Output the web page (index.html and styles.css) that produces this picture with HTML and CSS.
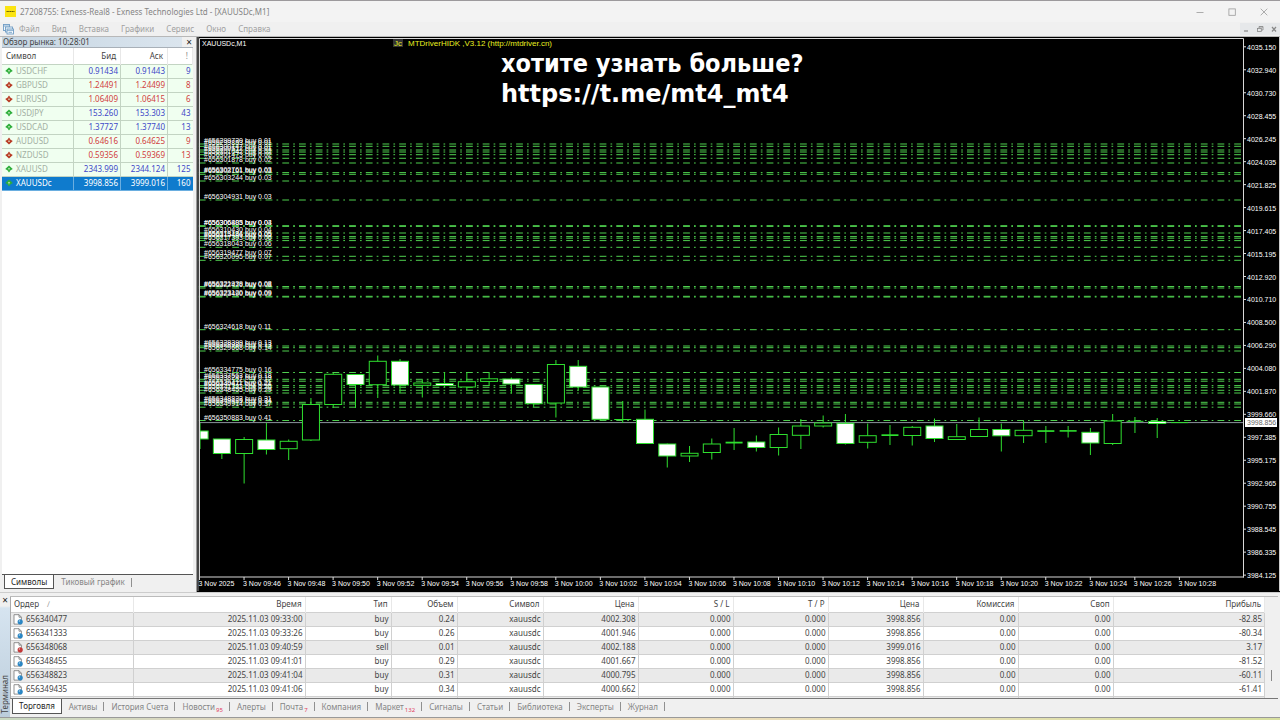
FILE: index.html
```html
<!DOCTYPE html>
<html lang="ru">
<head>
<meta charset="utf-8">
<title>27208755: Exness-Real8</title>
<link rel="stylesheet" href="styles.css">
</head>
<body>
<header class="titlebar">
  <svg class="logo" viewBox="0 0 11 11"><rect width="11" height="11" fill="#fbe412"/><path d="M1.5 5.5h8" stroke="#6b6100" stroke-dasharray="1.4 .3"/></svg>
  <h1 class="title">27208755: Exness-Real8 - Exness Technologies Ltd - [XAUUSDc,M1]</h1>
  <div class="winbtns">
    <button aria-label="Свернуть"><svg viewBox="0 0 8 8"><path d="M.5 4.5h7"/></svg></button>
    <button aria-label="Развернуть"><svg viewBox="0 0 8 8"><rect x=".9" y=".9" width="6.4" height="6.4"/></svg></button>
    <button aria-label="Закрыть"><svg viewBox="0 0 8 8"><path d="M.7.7l6.6 6.6M7.3.7L.7 7.3"/></svg></button>
  </div>
</header>
<nav class="menubar">
  <svg class="appicon" viewBox="0 0 11 11"><g fill="#f4f9fd" stroke="#6f9cc4" stroke-width=".9"><rect x=".5" y=".5" width="6" height="6"/><path d="M.5 2h6"/><rect x="2.5" y="3" width="7" height="5"/><rect x="4" y="5" width="6.5" height="5"/><path d="M4 6.3h6.5M5.5 8.3h3.5"/></g></svg>
  <button>Файл</button><button>Вид</button><button>Вставка</button><button>Графики</button><button>Сервис</button><button>Окно</button><button>Справка</button>
  <div class="mdibtns">
    <button aria-label="Свернуть окно"><svg viewBox="0 0 8 8"><path d="M2 6h4" stroke-width="1.2"/></svg></button>
    <button aria-label="Восстановить окно"><svg viewBox="0 0 8 8"><path d="M3 3V1.5h4V5H5.5M3 2h4"/><rect x="1.5" y="3.5" width="3.8" height="3"/></svg></button>
    <button aria-label="Закрыть окно"><svg viewBox="0 0 8 8"><path d="M2 2l4 4.5M6 2L2 6.5" stroke-width="1.2"/></svg></button>
  </div>
</nav>
<main class="workspace">
  <section class="watch">
    <div class="watch-head"><h2>Обзор рынка: 10:28:01</h2><button aria-label="Закрыть">×</button></div>
    <div class="watch-body">
      <table class="quotes">
        <colgroup><col><col class="q-price"><col class="q-price"><col class="q-spread"></colgroup>
        <thead><tr><th>Символ</th><th>Бид</th><th>Аск</th><th>!</th></tr></thead>
        <tbody id="quotes"></tbody>
      </table>
    </div>
    <div class="tabs watch-tabs"><button class="active">Символы</button><button>Тиковый график</button></div>
  </section>
  <section class="chart">
    <svg id="chart" viewBox="197 37 1083 554" role="img" aria-label="XAUUSDc M1"></svg>
  </section>
</main>
<section class="terminal">
  <div class="side"><button aria-label="Закрыть">×</button><span>Терминал</span></div>
  <div class="terminal-main">
    <div class="orders-wrap">
      <table class="orders">
        <colgroup><col class="c-order"><col class="c-time"><col class="c-type"><col class="c-vol"><col class="c-type"><col class="c-num"><col class="c-num"><col class="c-num"><col class="c-num"><col class="c-num"><col class="c-num"><col></colgroup>
        <thead><tr><th>Ордер <span class="sort">∕</span></th><th>Время</th><th>Тип</th><th>Объем</th><th>Символ</th><th>Цена</th><th>S / L</th><th>T / P</th><th>Цена</th><th>Комиссия</th><th>Своп</th><th>Прибыль</th></tr></thead>
        <tbody id="orders"></tbody>
      </table>
      <div class="scroll"><span></span></div>
    </div>
    <div class="tabs term-tabs"><button class="active">Торговля</button><button>Активы</button><button>История Счета</button><button>Новости<sub>95</sub></button><button>Алерты</button><button>Почта<sub>7</sub></button><button>Компания</button><button>Маркет<sub>132</sub></button><button>Сигналы</button><button>Статьи</button><button>Библиотека</button><button>Эксперты</button><button>Журнал</button></div>
  </div>
</section>
<footer class="edge"></footer>
<script src="app.js"></script>
</body>
</html>
```

FILE: styles.css
```css
* { box-sizing: border-box; }
body {
  margin: 0;
  min-height: 100vh;
  display: flex;
  flex-direction: column;
  background: #f0f0f0;
  color: #444;
  font: 8px/14px "Noto Sans", "Open Sans", sans-serif;
}
button { font: inherit; color: inherit; border: 0; background: none; padding: 0; }
h1, h2 { margin: 0; font: inherit; }
svg { display: block; }

.titlebar {
  display: flex;
  align-items: center;
  height: 22px;
  padding: 0 12px 0 5px;
  border-top: 1px solid #9c999c;
  background: #f3f3f3;
  color: #858585;
}
.logo { width: 11px; height: 11px; }
.title { flex: 1; padding-left: 4px; }
.winbtns { display: flex; gap: 24px; }
.winbtns svg, .mdibtns svg { width: 8px; height: 8px; fill: none; stroke: #999; stroke-width: .8; }

.menubar {
  display: flex;
  align-items: center;
  gap: 12px;
  height: 14px;
  padding-left: 3px;
  color: #a0a0a0;
}
.appicon { width: 11px; height: 11px; margin-right: -7px; }
.mdibtns { display: flex; gap: 6px; margin-left: auto; padding: 2px; background: #e6e8ea; }
.mdibtns svg { stroke: #888; }

.workspace { display: flex; flex: 1; border-top: 1px solid #b8b8b8; }
.watch { width: 197px; display: flex; flex-direction: column; padding: 0 3px 0 2px; border-right: 1px solid #999; }
.watch-head {
  display: flex;
  justify-content: space-between;
  height: 11px;
  padding-left: 1px;
  line-height: 10px;
  border-bottom: 1px solid #a8b0b8;
  background: linear-gradient(90deg, #c5d5e2, #dbe5ee 94%, #f0f0f0 94%);
}
.watch-head button { width: 8px; color: #222; font-size: 10px; }
.watch-body { flex: 1; background: #fff; border-bottom: 1px solid #555; }
table { width: 100%; border-collapse: collapse; table-layout: fixed; }
th, td { padding: 0 2px; font-weight: 400; text-align: right; overflow: hidden; white-space: nowrap; }
th:first-child, td:first-child { text-align: left; }
.q-price { width: 47px; }
.q-spread { width: 25px; }
.quotes th { height: 16px; padding: 0 4px; border-right: 1px solid #e8e8e8; }
.quotes th:last-child { color: #888; }
.quotes td { height: 14px; line-height: 12px; border: 1px solid #c3d4c3; border-left: 0; background: #f0fff0; }
.quotes td:last-child { border-right: 0; }
.quotes .up { color: #4048c8; }
.quotes .down { color: #d04040; }
.quotes td:first-child { color: #a3b0a3; }
.quotes .selected td, .quotes .selected td:first-child { background: #0f7bcd; color: #fff; border-color: #6aaee0; }
.cell { display: flex; align-items: center; gap: 3px; }
.cell svg { width: 8px; height: 8px; margin-left: 1px; }

.tabs { display: flex; color: #858585; }
.tabs button { position: relative; padding: 0 7px; white-space: nowrap; }
.tabs button:not(.active)::after {
  content: "";
  position: absolute;
  right: 0;
  top: 3px;
  height: 9px;
  border-right: 1px solid #909090;
}
.tabs .active { padding: 0 6px; color: #222; background: #fff; border: 1px solid #555; border-top: 0; }
.watch-tabs { height: 17px; padding: 0 0 3px 2px; }

.chart { flex: 1; min-width: 0; background: #000; }
.chart svg { width: 100%; height: auto; }
.axis { font: 7px "Liberation Sans", sans-serif; fill: #fff; }
.promo { font: bold 25px "DejaVu Sans Condensed", "DejaVu Sans", sans-serif; fill: #fff; }
.promo-link { font: bold 24px "DejaVu Sans", sans-serif; fill: #fff; }
.driver { font: 8px "Liberation Sans", sans-serif; fill: #e8f020; }
.order-line { stroke: #4fd04f; fill: none; }
.frame { stroke: #d8d8d8; fill: none; }
.candle { stroke: #2fdf2f; fill: #000; }
.candle.white { fill: #fff; }
.price-tag { fill: #666; }

.terminal { display: flex; height: 125px; padding: 3px 2px 0 0; border-top: 1px solid #ccc; }
.side { width: 10px; display: flex; flex-direction: column; background: linear-gradient(#f0f0f0 10px, #d6e4f0 12px, #bccddb); }
.side button { height: 8px; line-height: 8px; font-size: 10px; color: #222; }
.side span { writing-mode: vertical-rl; transform: rotate(180deg); margin-top: auto; padding-top: 3px; line-height: 10px; }
.terminal-main { flex: 1; min-width: 0; display: flex; flex-direction: column; border-top: 1px solid #bbb; }
.orders-wrap { display: flex; height: 102px; overflow: hidden; border-left: 1px solid #aaa; border-bottom: 1px solid #777; }
.orders { flex: 1; background: #fff; }
.c-order { width: 122px; }
.c-time { width: 172px; }
.c-type { width: 86px; }
.c-vol { width: 66px; }
.c-num { width: 95px; }
.orders th { height: 15px; padding: 0 3px; border-right: 1px solid #e8e8e8; }
.orders td { height: 14px; line-height: 12px; border: 1px solid #d0d0d0; border-left: 0; }
.orders tr:nth-child(odd) td { background: #eaeaea; }
.orders .cell svg { width: 10px; height: 11px; margin-left: 0; }
.sort { color: #999; padding-left: 6px; }
.scroll { width: 13px; display: flex; justify-content: center; align-items: flex-end; padding-bottom: 17px; }
.scroll span { width: 1px; height: 11px; background: #888; }
.term-tabs { padding-left: 2px; }
.term-tabs sub { color: #e04060; font-size: 6px; line-height: 1px; padding-left: 1px; }
.edge { height: 3px; border-top: 1px solid #999; background: linear-gradient(90deg, #c8d8c0, #f0d8c0 30%, #e8e0b8 70%, #d8e0a0); }
```

FILE: app.js
```js
const quotes = [
  ['USDCHF', '0.91434', '0.91443', 9, 'up'], ['GBPUSD', '1.24491', '1.24499', 8, 'down'],
  ['EURUSD', '1.06409', '1.06415', 6, 'down'], ['USDJPY', '153.260', '153.303', 43, 'up'],
  ['USDCAD', '1.37727', '1.37740', 13, 'up'], ['AUDUSD', '0.64616', '0.64625', 9, 'down'],
  ['NZDUSD', '0.59356', '0.59369', 13, 'down'], ['XAUUSD', '2343.999', '2344.124', 125, 'up'],
  ['XAUUSDc', '3998.856', '3999.016', 160, 'up']
];
const arrow = dir => {
  const color = dir === 'up' ? '#2fae3c' : '#b83a24';
  const flip = dir === 'up' ? '' : ' transform="rotate(180 4 4)"';
  return `<svg viewBox="0 0 8 8"><g${flip}><path d="M4 .4L7.8 4 5.6 5.2 4 7.6 2.4 5.2.2 4z" fill="${color}"/><path d="M4 2.8L5 4H4.3v1.2h-.6V4H3z" fill="#e8f4d8"/></g></svg>`;
};
document.getElementById('quotes').innerHTML = quotes.map(([s, b, a, n, d]) =>
  `<tr${s === 'XAUUSDc' ? ' class="selected"' : ''}><td><div class="cell">${arrow(d)}${s}</div></td><td class="${d}">${b}</td><td class="${d}">${a}</td><td class="${d}">${n}</td></tr>`).join('');

const orders = [
  ['656340477', '09:33:00', 'buy', '0.24', '4002.308', '3998.856', '-82.85'],
  ['656341333', '09:33:26', 'buy', '0.26', '4001.946', '3998.856', '-80.34'],
  ['656348068', '09:40:59', 'sell', '0.01', '4002.188', '3999.016', '3.17'],
  ['656348455', '09:41:01', 'buy', '0.29', '4001.667', '3998.856', '-81.52'],
  ['656348823', '09:41:04', 'buy', '0.31', '4000.795', '3998.856', '-60.11'],
  ['656349435', '09:41:06', 'buy', '0.34', '4000.662', '3998.856', '-61.41']
];
const sheet = type => `<svg viewBox="0 0 10 11"><path d="M1 .7h5l2.4 2.5v6.9H1z" fill="#fff" stroke="#777" stroke-width=".8"/><path d="M6 .7v2.5h2.4" fill="none" stroke="#777" stroke-width=".8"/><circle cx="7.2" cy="7.8" r="2.6" fill="${type === 'buy' ? '#2a86c4' : '#c43838'}"/><circle cx="6.4" cy="7" r=".8" fill="#fff" opacity=".6"/></svg>`;
document.getElementById('orders').innerHTML = orders.map(([id, t, type, v, p, c, profit]) =>
  `<tr><td><div class="cell">${sheet(type)}${id}</div></td>` +
  ['2025.11.03 ' + t, type, v, 'xauusdc', p, '0.000', '0.000', c, '0.00', '0.00', profit].map(x => `<td>${x}</td>`).join('') + '</tr>').join('') +
  '<tr>' + '<td></td>'.repeat(12) + '</tr>';

// [y, ticket, volume] of every open order
const lines = [
  [144, '656299730', '0.01'], [146.3, '656299853', '0.01'], [150, '656300147', '0.01'], [152, '656300512', '0.01'],
  [154.7, '656301042', '0.02'], [158.3, '656301473', '0.02'], [163, '656301878', '0.02'],
  [172.6, '656302761', '0.03'], [174.3, '656303101', '0.03'], [181, '656303244', '0.03'], [200, '656304931', '0.03'],
  [225.7, '656306403', '0.04'], [226.4, '656306885', '0.03'], [233, '656310430', '0.04'], [236.6, '656313184', '0.05'],
  [238.2, '656315446', '0.05'], [240.6, '656317393', '0.06'], [247.3, '656318043', '0.06'], [256.3, '656319477', '0.07'],
  [260.3, '656320095', '0.07'], [286.5, '656321939', '0.08'], [288, '656322476', '0.08'], [296.3, '656323120', '0.09'],
  [297, '656323490', '0.09'], [329.7, '656324618', '0.11'], [346, '656328399', '0.13'], [347.7, '656328980', '0.13'],
  [351, '656329668', '0.14'], [372.5, '656334775', '0.16'], [379.3, '656337563', '0.18'], [381.2, '656338241', '0.19'],
  [385.6, '656339411', '0.21'], [387.3, '656340477', '0.24'], [390.3, '656341333', '0.26'], [393, '656348455', '0.29'],
  [402.3, '656348823', '0.31'], [404, '656349435', '0.34'], [407.2, '656349914', '0.37'], [420.5, '656350883', '0.41']
];
// [high, body top, body bottom, low, white body]
const candles = [
  [423, 431, 439, 449, 1], [439, 439, 453.5, 459, 1], [437, 439.5, 453.5, 483.5], [423, 440, 449.5, 454.5, 1],
  [439.5, 441.3, 448.7, 460], [398, 404.5, 440, 441], [373, 374.3, 404.5, 408], [374, 374.5, 384.5, 408, 1],
  [355.5, 361.3, 384.7, 398], [359, 361.3, 385, 393, 1], [379.5, 383, 385.3, 397.5], [372.5, 383.5, 385.5, 387, 1],
  [372.5, 381.7, 387, 390], [372.5, 378.8, 381.4, 386], [377.5, 379, 384, 393.5, 1], [384, 384.4, 403.7, 407, 1],
  [360, 364.5, 403, 417.5], [360, 366.3, 387, 390.5, 1], [387, 387, 419.3, 420, 1], [401, 419.5, 419.5, 423],
  [409.5, 419.3, 443.5, 444, 1], [443.5, 444, 456, 467.5, 1], [446, 453.3, 456, 462], [438.5, 444, 452.5, 459.5],
  [428, 442.2, 443, 450], [435.5, 442, 447.5, 451.5, 1], [427.5, 434.5, 447.5, 455.5], [419, 426, 435.3, 449],
  [415.5, 423, 426, 427.5], [414, 423.3, 443.5, 444.5, 1], [423.5, 435.7, 442.3, 448.5], [425, 434.8, 435.5, 445],
  [426, 427.3, 435.5, 445.5], [418.5, 426, 438.5, 442, 1], [424, 436.7, 439.5, 440], [417.5, 429.5, 436.5, 437],
  [423.5, 429.5, 435.8, 451.5, 1], [421, 430.3, 435.7, 443], [426, 430.7, 431.4, 443], [426, 430.6, 431.2, 437.5],
  [428, 432.3, 443, 455, 1], [414, 421, 443.5, 445], [417, 421.3, 421.3, 433], [418, 421.5, 423.5, 438, 1],
  [422.6, 422.6, 422.6, 422.6]
];
const prices = '4035.150 4032.940 4030.730 4028.455 4026.245 4024.035 4021.825 4019.615 4017.405 4015.195 4012.920 4010.710 4008.500 4006.290 4004.080 4001.870 3999.660 3997.385 3995.175 3992.965 3990.755 3988.545 3986.335 3984.125'.split(' ');

let out = '<rect x="197" y="37" width="1083" height="554" fill="#000"/>';
for (const [y] of lines) out += `<path class="order-line" d="M198.8 ${y}H1243" stroke-dasharray="6.8 4.1 1.7 4.1"/>`;
out += '<path d="M200 422.6H1243" stroke="#8a939c"/>';
candles.forEach(([h, t, b, l, white], i) => {
  const x = 199.6 + 22.27 * i;
  const left = Math.max(x - 8.5, 200);
  out += `<g class="candle${white ? ' white' : ''}"><path d="M${Math.max(x, 200)} ${h}V${l}"/>` +
    (b - t < 1 ? `<path d="M${left} ${(t + b) / 2}H${x + 8.5}" stroke-width="${1 + b - t}"/>`
      : `<rect x="${left}" y="${t}" width="${x + 8.5 - left}" height="${b - t}"/>`) + '</g>';
});
out += '<path class="frame" d="M199.5 577V38.5H1243.5V577.5M199 577H1244"/><path d="M198 37V591" stroke="#888"/><path d="M1279.5 37V591" stroke="#ccc"/>';
out += '<g class="axis">';
for (const [y, id, vol] of lines) out += `<text x="204" y="${y - 1}">#${id} buy ${vol}</text>`;
prices.forEach((p, i) => {
  const y = 46.8 + 22.97 * i;
  out += `<path d="M1243 ${y}h3" stroke="#ddd"/><text x="1247" y="${y + 3}">${p}</text>`;
});
for (let i = 0; i < 23; i++) {
  const x = 199.5 + 44.54 * i, m = 44 + i * 2;
  const time = i ? `${m < 60 ? '09' : '10'}:${String(m % 60).padStart(2, '0')}` : '2025';
  out += `<path d="M${x} 577v3" stroke="#ddd"/><text x="${x - 1}" y="586">3 Nov ${time}</text>`;
}
out += '<text x="202" y="46">XAUUSDc,M1</text></g>';
out += '<rect x="1245" y="418" width="32" height="9" fill="#fff"/><text class="axis price-tag" x="1247" y="425">3998.856</text>';
out += '<rect x="393" y="39" width="10" height="8" fill="#333"/><text class="driver" x="394" y="46">Jc</text><text class="driver" x="408" y="46">MTDriverHIDK ,V3.12 (http://mtdriver.cn)</text>';
out += '<text class="promo" x="501" y="72">хотите узнать больше?</text><text class="promo-link" x="501" y="102">https://t.me/mt4_mt4</text>';
document.getElementById('chart').innerHTML = out;
```
